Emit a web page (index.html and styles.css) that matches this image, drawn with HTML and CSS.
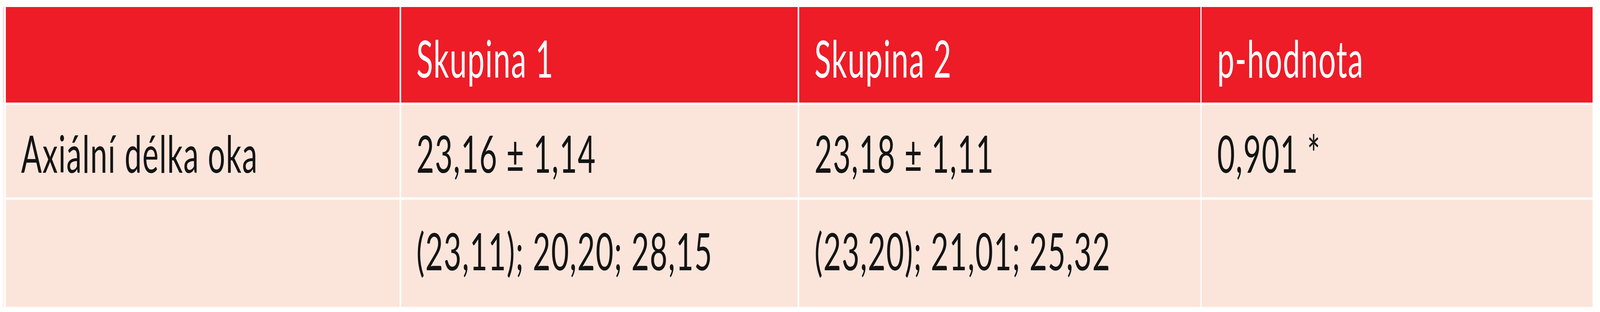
FILE: index.html
```html
<!DOCTYPE html>
<html lang="cs">
<head>
<meta charset="utf-8">
<title>Tabulka</title>
<link rel="stylesheet" href="styles.css">
</head>
<body>
<div class="page">
  <div class="strip"></div>
  <div class="table">
    <div class="cell head"></div>
    <div class="cell head"><span class="t">Skupina 1</span></div>
    <div class="cell head"><span class="t">Skupina 2</span></div>
    <div class="cell head"><span class="t">p-hodnota</span></div>

    <div class="cell r1"><span class="t">Axiální délka oka</span></div>
    <div class="cell r1"><span class="t">23,16 ± 1,14</span></div>
    <div class="cell r1"><span class="t">23,18 ± 1,11</span></div>
    <div class="cell r1"><span class="t">0,901 *</span></div>

    <div class="cell r2"></div>
    <div class="cell r2"><span class="t">(23,11); 20,20; 28,15</span></div>
    <div class="cell r2"><span class="t">(23,20); 21,01; 25,32</span></div>
    <div class="cell r2"></div>
  </div>
</div>
</body>
</html>
```

FILE: styles.css
```css
html, body {
  margin: 0;
  padding: 0;
  background: #ffffff;
}

/* Horizontal measures are proportional to a 6856px-wide design; vertical ones are fixed. */
.page {
  display: flex;
  align-items: flex-start;
  padding: 18px 0.467vw 0 0.175vw;
}

.strip {
  flex: 0 0 auto;
  width: 0.1021vw;
  height: 769px;
  margin-right: 0.0875vw;
  background: linear-gradient(to bottom, #f9dcda 0, #f9dcda 245px, #fdf3ef 245px, #fdf3ef 100%);
}

.table {
  flex: 1 1 auto;
  min-width: 0;
  display: grid;
  grid-template-columns: 1688fr 1699fr 1719fr 1675fr;
  grid-template-rows: 245px 237px 275px;
  column-gap: 0.0875vw;
  row-gap: 6px;
  font-family: "Lato", "Open Sans", sans-serif;
  font-size: 131px;
  letter-spacing: 3px;
  line-height: 1.2;
}

.cell {
  min-width: 0;
  padding-left: 0.9627vw;
  white-space: nowrap;
  color: #141414;
  background: #fbe5db;
}

.head {
  background: #ed1c27;
  color: #ffffff;
  padding-top: 52px;
}

.r1 {
  padding-top: 45px;
}

.r2 {
  padding-top: 52px;
}

.t {
  display: inline-block;
  transform-origin: 0 50%;
}

@media (max-width: 4096px) {
  .t {
    transform: scaleX(0.597433);
  }
}
```
